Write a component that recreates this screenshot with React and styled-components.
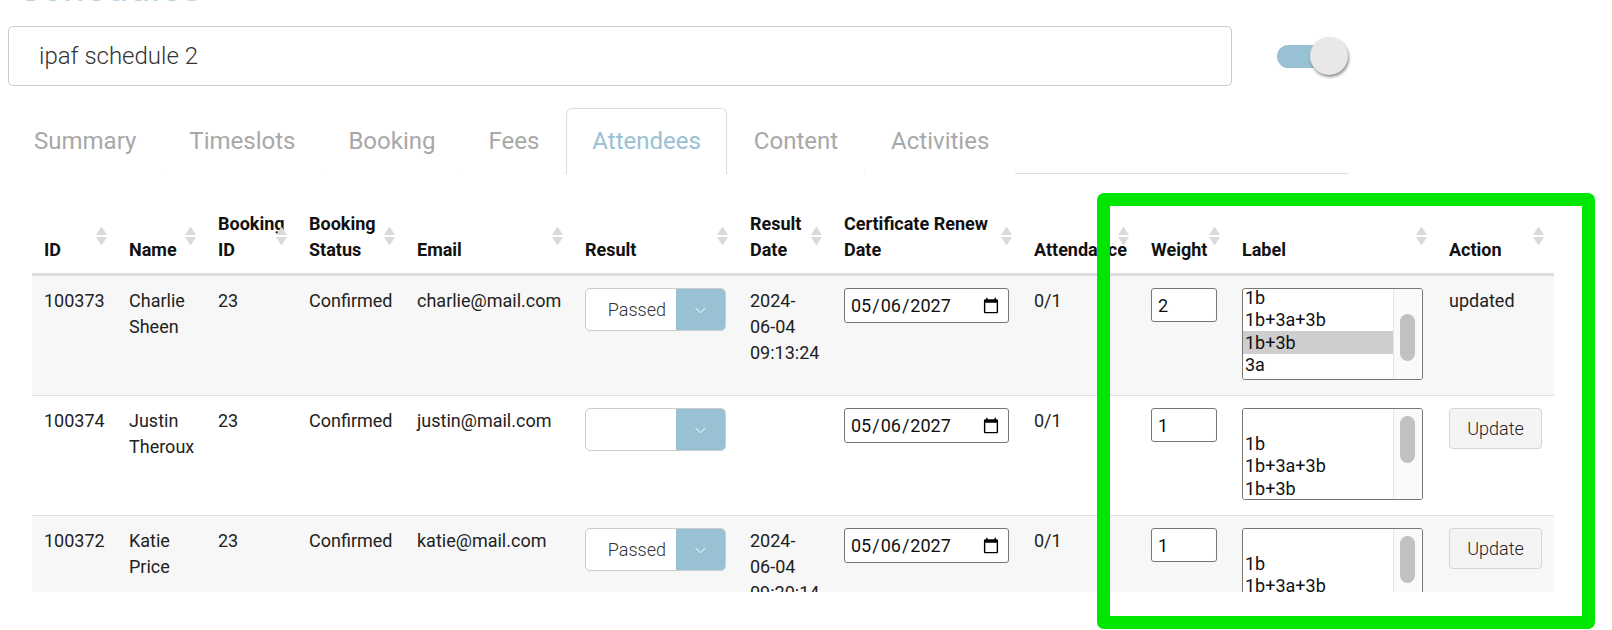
import { useEffect, useRef } from "react";
import styled, { createGlobalStyle } from "styled-components";

const columns = [
    { label: "ID", width: 85 },
    { label: "Name", width: 89 },
    { label: "Booking ID", width: 91 },
    { label: "Booking Status", width: 108 },
    { label: "Email", width: 168 },
    { label: "Result", width: 165 },
    { label: "Result Date", width: 94 },
    { label: "Certificate Renew Date", width: 190 },
    { label: "Attendance", width: 117 },
    { label: "Weight", width: 91 },
    { label: "Label", width: 207 },
    { label: "Action", width: 117 },
];

const labelOptions = ["", "1b", "1b+3a+3b", "1b+3b", "3a", "3b"];
const OPTION_H = 22.1;
const VIEW_H = 90;

const attendees = [
    {
        id: 100373,
        name: "Charlie Sheen",
        email: "charlie@mail.com",
        result: "Passed",
        resultDate: "2024-06-04 09:13:24",
        weight: "2",
        labels: ["1b+3b"],
        scroll: 26,
        updated: true,
    },
    {
        id: 100374,
        name: "Justin Theroux",
        email: "justin@mail.com",
        result: "",
        resultDate: "",
        weight: "1",
        labels: [],
        scroll: 0,
        updated: false,
    },
    {
        id: 100372,
        name: "Katie Price",
        email: "katie@mail.com",
        result: "Passed",
        resultDate: "2024-06-04 09:20:14",
        weight: "1",
        labels: [],
        scroll: 0,
        updated: false,
    },
];

const tabs = ["Summary", "Timeslots", "Booking", "Fees", "Attendees", "Content", "Activities"];

const SortIcon = () => (
    <SortIconWrap>
        <svg width="11" height="19" viewBox="0 0 11 19">
            <polygon points="0,8.5 5.5,0 11,8.5" fill="#dadada" />
            <polygon points="0,10.5 11,10.5 5.5,19" fill="#dadada" />
        </svg>
    </SortIconWrap>
);

const DateTime = ({ value }) => {
    if (!value) return null;
    const [date, time] = value.split(" ");
    const [y, m, d] = date.split("-");
    return (
        <>
            {y}-<NoWrap>{m}-{d}</NoWrap> {time}
        </>
    );
};

const LabelList = ({ labels, scroll }) => {
    const ref = useRef(null);
    useEffect(() => {
        if (ref.current) ref.current.scrollTop = scroll;
    }, [scroll]);

    const contentH = labelOptions.length * OPTION_H;
    const thumbH = (VIEW_H * VIEW_H) / contentH;
    const thumbTop = (scroll / (contentH - VIEW_H)) * (VIEW_H - thumbH);

    return (
        <ListBox>
            <LabelSelect ref={ref} multiple defaultValue={labels}>
                {labelOptions.map((opt) => (
                    <option key={opt || "none"} value={opt}>
                        {opt}
                    </option>
                ))}
            </LabelSelect>
            <ScrollRail>
                <ScrollThumb style={{ top: thumbTop + 7, height: thumbH - 14 }} />
            </ScrollRail>
        </ListBox>
    );
};

const AttendeeRow = ({ row }) => {
    return (
        <tr>
            <Td>{row.id}</Td>
            <Td>{row.name}</Td>
            <Td>23</Td>
            <Td>Confirmed</Td>
            <Td>{row.email}</Td>
            <Td>
                <ResultSelect>
                    <ResultValue>{row.result}</ResultValue>
                    <ResultArrow>
                        <svg width="11" height="7" viewBox="0 0 11 7">
                            <polyline points="0.5,0.8 5.5,5.8 10.5,0.8" fill="none" stroke="#fff" strokeWidth="1" />
                        </svg>
                    </ResultArrow>
                </ResultSelect>
            </Td>
            <Td>
                <DateTime value={row.resultDate} />
            </Td>
            <Td>
                <DateInput type="date" defaultValue="2027-05-06" />
            </Td>
            <Td>0/1</Td>
            <Td>
                <WeightInput type="text" defaultValue={row.weight} />
            </Td>
            <Td>
                <LabelList labels={row.labels} scroll={row.scroll} />
            </Td>
            <Td>{row.updated ? "updated" : <UpdateBtn>Update</UpdateBtn>}</Td>
        </tr>
    );
};

const App = () => {
    return (
        <Page>
            <GlobalStyle />
            <Heading>Schedules</Heading>
            <TopRow>
                <NameInput defaultValue="ipaf schedule 2" />
                <Toggle>
                    <ToggleTrack />
                    <ToggleKnob />
                </Toggle>
            </TopRow>
            <TabBar>
                {tabs.map((tab) => (
                    <Tab key={tab} $active={tab === "Attendees"}>
                        {tab}
                    </Tab>
                ))}
            </TabBar>
            <TableWrap>
                <Table>
                    <colgroup>
                        {columns.map((c) => (
                            <col key={c.label} style={{ width: c.width }} />
                        ))}
                    </colgroup>
                    <thead>
                        <tr>
                            {columns.map((c) => (
                                <Th key={c.label}>
                                    {c.label}
                                    <SortIcon />
                                </Th>
                            ))}
                        </tr>
                    </thead>
                    <tbody>
                        {attendees.map((row) => (
                            <AttendeeRow key={row.id} row={row} />
                        ))}
                    </tbody>
                </Table>
            </TableWrap>
            <Highlight />
        </Page>
    );
};

const GlobalStyle = createGlobalStyle`
    body {
        margin: 0;
        background: #fff;
        font-family: Roboto, "Liberation Sans", sans-serif;
        color: #222;
        overflow: hidden;
    }
`;

const Page = styled.div`
    position: relative;
    width: 1612px;
    height: 630px;
    padding: 0 8px;
    box-sizing: border-box;
    overflow: hidden;
`;

const Heading = styled.h1`
    margin: -32.5px 0 0 10px;
    height: 40px;
    font-size: 40px;
    line-height: 40px;
    font-weight: 400;
    color: #b3d4e4;
`;

const TopRow = styled.div`
    display: flex;
    align-items: center;
    gap: 45px;
    margin-top: 18.5px;
`;

const NameInput = styled.input`
    width: 1224px;
    height: 60px;
    box-sizing: border-box;
    border: 1px solid #ccc;
    border-radius: 5px;
    padding: 0 30px;
    font-family: Roboto, sans-serif;
    font-size: 24px;
    font-weight: 300;
    color: #333;
    outline: none;
`;

const Toggle = styled.div`
    position: relative;
    width: 71px;
    height: 38px;
`;

const ToggleTrack = styled.div`
    position: absolute;
    left: 0;
    top: 8px;
    width: 64px;
    height: 23px;
    border-radius: 12px;
    background: #98c1d3;
`;

const ToggleKnob = styled.div`
    position: absolute;
    right: 0;
    top: 0;
    width: 38px;
    height: 38px;
    border-radius: 50%;
    background: #e8e8e8;
    box-shadow: 1px 2px 3px rgba(0, 0, 0, 0.45);
`;

const TabBar = styled.div`
    display: flex;
    gap: 1px;
    width: 1340px;
    margin-top: 22px;
    border-bottom: 1px solid #ddd;
`;

const Tab = styled.div`
    display: flex;
    align-items: center;
    height: 64px;
    margin-bottom: -1px;
    padding: 0 25px;
    border: 1px solid ${(p) => (p.$active ? "#ddd" : "transparent")};
    border-bottom-color: ${(p) => (p.$active ? "#fff" : "transparent")};
    border-radius: 6px 6px 0 0;
    background: #fff;
    font-size: 24px;
    color: ${(p) => (p.$active ? "#98c1d3" : "#a8a8a8")};
`;

const TableWrap = styled.div`
    width: 1522px;
    height: 393px;
    margin: 25px 0 0 24px;
    overflow: hidden;
`;

const Table = styled.table`
    width: 1522px;
    table-layout: fixed;
    border-collapse: collapse;
    font-size: 18px;
    line-height: 25.7px;
    tbody tr:nth-child(odd) {
        background: #f7f7f7;
    }
`;

const Th = styled.th`
    position: relative;
    padding: 12px 30px 11px 12px;
    text-align: left;
    vertical-align: bottom;
    font-weight: 700;
    color: #111;
    border-bottom: 3px solid #ddd;
`;

const SortIconWrap = styled.span`
    position: absolute;
    right: 10px;
    top: 50%;
    transform: translateY(-50%);
    display: flex;
`;

const Td = styled.td`
    padding: 12px 6px 15px 12px;
    vertical-align: top;
    border-bottom: 1px solid #e0e0e0;
    color: #222;
`;

const NoWrap = styled.span`
    white-space: nowrap;
`;

const ResultSelect = styled.div`
    display: flex;
    width: 141px;
    height: 43px;
    box-sizing: border-box;
    border: 1px solid #ccc;
    border-radius: 5px;
    overflow: hidden;
    background: #fff;
`;

const ResultValue = styled.div`
    flex: 1;
    padding-right: 10px;
    text-align: right;
    font-size: 18px;
    font-weight: 300;
    line-height: 41px;
    color: #333;
`;

const ResultArrow = styled.div`
    display: flex;
    align-items: center;
    justify-content: center;
    width: 49px;
    padding-top: 2px;
    box-sizing: border-box;
    background: #98c1d3;
`;

const DateInput = styled.input`
    width: 165px;
    height: 35px;
    box-sizing: border-box;
    padding: 0 6px 0 5px;
    border: 1px solid #767676;
    border-radius: 3px;
    font-family: Roboto, sans-serif;
    font-size: 18px;
    color: #111;
    background: #fff;
`;

const WeightInput = styled.input`
    width: 66px;
    height: 34px;
    box-sizing: border-box;
    padding: 0 6px;
    border: 1px solid #767676;
    border-radius: 3px;
    font-family: Roboto, sans-serif;
    font-size: 18px;
    color: #111;
    background: #fff;
`;

const ListBox = styled.div`
    display: flex;
    width: 181px;
    height: 92px;
    box-sizing: border-box;
    border: 1px solid #767676;
    border-radius: 3px;
    overflow: hidden;
    background: #fff;
`;

const LabelSelect = styled.select`
    flex: 1;
    min-width: 0;
    height: ${VIEW_H}px;
    padding: 0;
    border: none;
    font-family: Roboto, sans-serif;
    font-size: 18px;
    color: #111;
    background: #fff;
    outline: none;
    overflow: hidden;
    option {
        padding: 0.5px 2px;
    }
`;

const ScrollRail = styled.div`
    position: relative;
    width: 29px;
    flex-shrink: 0;
    box-sizing: border-box;
    border-left: 1px solid #e6e6e6;
    background: #fafafa;
`;

const ScrollThumb = styled.div`
    position: absolute;
    left: 6px;
    width: 15px;
    border-radius: 8px;
    background: #c1c1c1;
`;

const UpdateBtn = styled.button`
    width: 93px;
    height: 41px;
    border: 1px solid #d6d6d6;
    border-radius: 4px;
    background: #f4f4f4;
    font-family: Roboto, sans-serif;
    font-size: 18px;
    font-weight: 300;
    color: #222;
`;

const Highlight = styled.div`
    position: absolute;
    left: 1097px;
    top: 193px;
    width: 498px;
    height: 436px;
    box-sizing: border-box;
    border: 13px solid #00e600;
    border-radius: 7px;
    pointer-events: none;
`;

export default App;
